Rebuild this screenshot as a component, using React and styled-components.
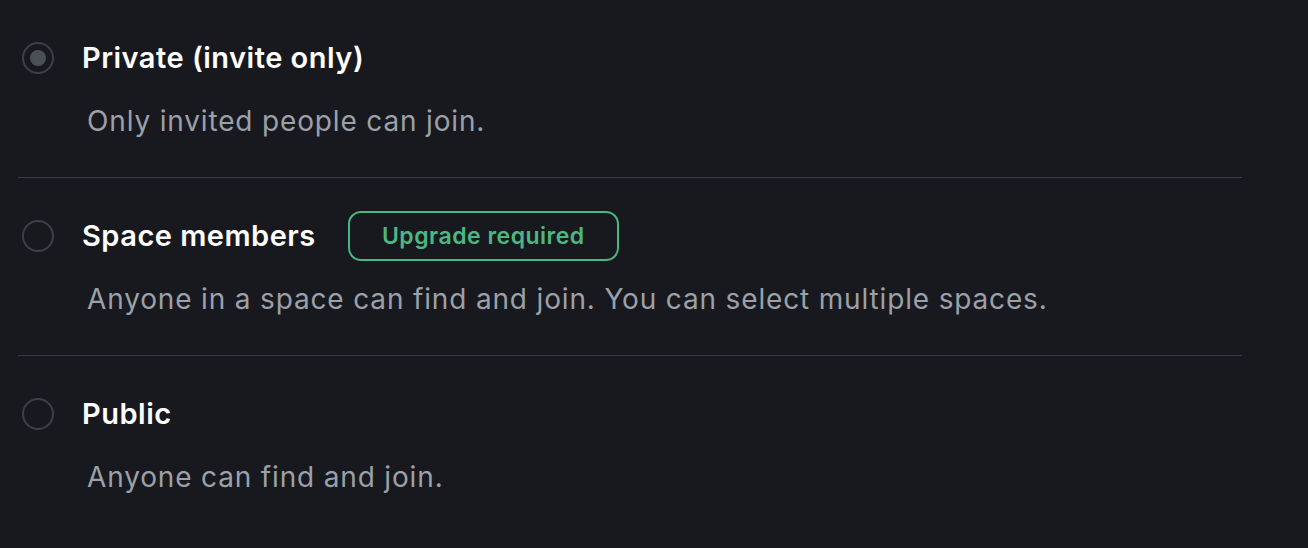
import React from "react";
import styled, { createGlobalStyle } from "styled-components";

const Global = createGlobalStyle`
  html, body { margin: 0; padding: 0; background: #17191e; }
  body { font-family: Inter, "Noto Sans", sans-serif; -webkit-font-smoothing: antialiased; }
  * { box-sizing: border-box; }
`;

const Page = styled.div`
  width: 1308px;
  height: 548px;
  background: #17191e;
  padding: 0 66px 0 18px;
`;

const List = styled.div`
  display: flex;
  flex-direction: column;
`;

const Option = styled.div`
  display: flex;
  flex-direction: column;
  gap: 22px;
  padding: 36px 0 36px;
  border-bottom: ${(p) => (p.$last ? "none" : "1.5px solid #383b42")};
`;

const Header = styled.div`
  display: flex;
  align-items: center;
  height: 43px;
`;

const Radio = styled.span`
  width: 32px;
  height: 32px;
  margin-left: 4px;
  margin-right: 28px;
  border-radius: 50%;
  border: 2px solid #3d4047;
  display: flex;
  align-items: center;
  justify-content: center;
  flex-shrink: 0;
  &::after {
    content: "";
    width: 16px;
    height: 16px;
    border-radius: 50%;
    background: #4b4f58;
    display: ${(p) => (p.$checked ? "block" : "none")};
  }
`;

const Title = styled.span`
  font-size: 29px;
  font-weight: 600;
  color: #ffffff;
  letter-spacing: 0.5px;
`;

const Badge = styled.span`
  margin-left: 32px;
  height: 50px;
  width: 271px;
  border: 2px solid #4cb782;
  border-radius: 13px;
  color: #4cb782;
  font-size: 23px;
  font-weight: 600;
  letter-spacing: 0.5px;
  display: flex;
  align-items: center;
  justify-content: center;
  flex-shrink: 0;
`;

const Description = styled.div`
  margin-left: 69px;
  font-size: 28px;
  line-height: 40px;
  letter-spacing: 0.84px;
  color: #9ba0a9;
`;

const options = [
  { title: "Private (invite only)", desc: "Only invited people can join.", checked: true },
  { title: "Space members", desc: "Anyone in a space can find and join. You can select multiple spaces.", badge: "Upgrade required" },
  { title: "Public", desc: "Anyone can find and join." },
];

export default function App() {
  return (
    <>
      <Global />
      <Page>
        <List>
          {options.map((o, i) => (
            <Option key={o.title} $last={i === options.length - 1}>
              <Header>
                <Radio $checked={o.checked} />
                <Title>{o.title}</Title>
                {o.badge && <Badge>{o.badge}</Badge>}
              </Header>
              <Description>{o.desc}</Description>
            </Option>
          ))}
        </List>
      </Page>
    </>
  );
}
